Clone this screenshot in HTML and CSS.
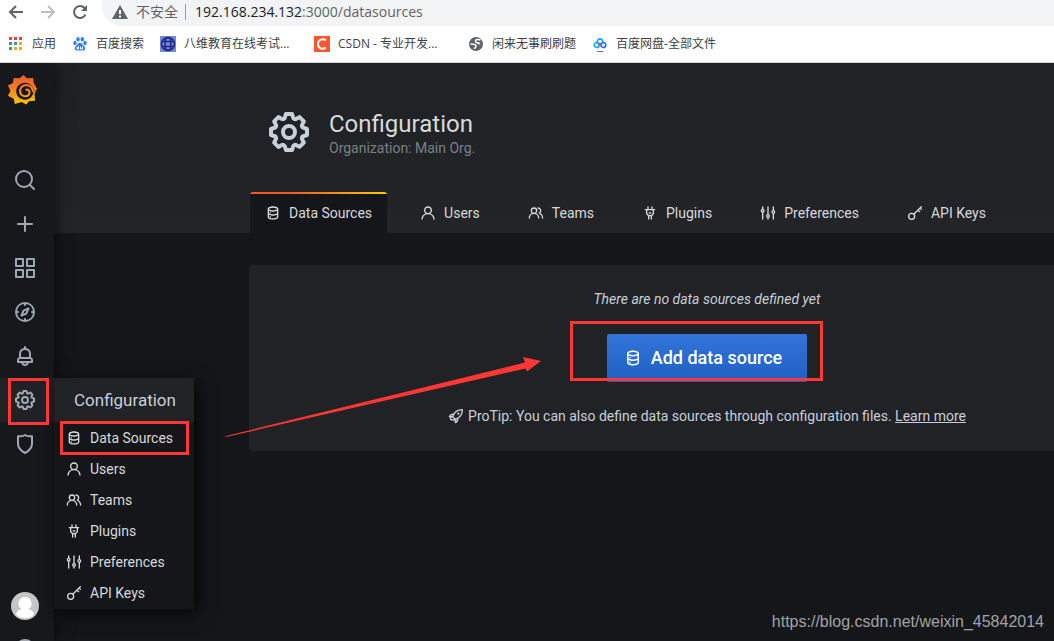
FILE: index.html
```html
<!DOCTYPE html>
<html lang="en">
<head>
<meta charset="utf-8">
<title>Configuration: Data Sources</title>
<link rel="stylesheet" href="styles.css">
</head>
<body>
<svg class="defs" aria-hidden="true">
  <symbol id="database" viewBox="0 0 24 24"><path d="M8,16.5a1,1,0,1,0,1,1A1,1,0,0,0,8,16.5ZM12,2C8,2,4,3.37,4,6V18c0,2.63,4,4,8,4s8-1.37,8-4V6C20,3.37,16,2,12,2Zm6,16c0,.71-2.28,2-6,2s-6-1.29-6-2V14.73A13.16,13.16,0,0,0,12,16a13.16,13.16,0,0,0,6-1.27Zm0-6c0,.71-2.28,2-6,2s-6-1.29-6-2V8.73A13.16,13.16,0,0,0,12,10a13.16,13.16,0,0,0,6-1.27ZM12,8C8.28,8,6,6.71,6,6s2.28-2,6-2,6,1.29,6,2S15.72,8,12,8ZM8,10.5a1,1,0,1,0,1,1A1,1,0,0,0,8,10.5Z"/></symbol>
  <symbol id="cog" viewBox="0 0 24 24"><path d="M21.32,9.55l-1.89-.63.89-1.78A1,1,0,0,0,20.13,6L18,3.87a1,1,0,0,0-1.15-.19l-1.78.89-.63-1.89A1,1,0,0,0,13.5,2h-3a1,1,0,0,0-.95.68L8.92,4.57,7.14,3.68A1,1,0,0,0,6,3.87L3.87,6a1,1,0,0,0-.19,1.15l.89,1.78-1.89.63A1,1,0,0,0,2,10.5v3a1,1,0,0,0,.68.95l1.89.63-.89,1.78A1,1,0,0,0,3.87,18L6,20.13a1,1,0,0,0,1.15.19l1.78-.89.63,1.89a1,1,0,0,0,.95.68h3a1,1,0,0,0,.95-.68l.63-1.89,1.78.89A1,1,0,0,0,18,20.13L20.13,18a1,1,0,0,0,.19-1.15l-.89-1.78,1.89-.63A1,1,0,0,0,22,13.5v-3A1,1,0,0,0,21.32,9.55ZM20,12.78l-1.2.4A2,2,0,0,0,17.64,16l.57,1.14-1.1,1.1L16,17.64a2,2,0,0,0-2.79,1.16l-.4,1.2H11.22l-.4-1.2A2,2,0,0,0,8,17.64l-1.14.57-1.1-1.1L6.36,16A2,2,0,0,0,5.2,13.18L4,12.78V11.22l1.2-.4A2,2,0,0,0,6.36,8L5.79,6.89l1.1-1.1L8,6.36A2,2,0,0,0,10.82,5.2l.4-1.2h1.56l.4,1.2A2,2,0,0,0,16,6.36l1.14-.57,1.1,1.1L17.64,8a2,2,0,0,0,1.16,2.79l1.2.4ZM12,8a4,4,0,1,0,4,4A4,4,0,0,0,12,8Zm0,6a2,2,0,1,1,2-2A2,2,0,0,1,12,14Z"/></symbol>
  <symbol id="user" viewBox="0 0 24 24"><path d="M15.71,12.71a6,6,0,1,0-7.42,0,10,10,0,0,0-6.22,8.18,1,1,0,0,0,2,.22,8,8,0,0,1,15.9,0,1,1,0,0,0,1,.89h.11a1,1,0,0,0,.88-1.1A10,10,0,0,0,15.71,12.71ZM12,12a4,4,0,1,1,4-4A4,4,0,0,1,12,12Z"/></symbol>
  <symbol id="users" viewBox="0 0 24 24"><path d="M12.3,12.22A4.92,4.92,0,0,0,14,8.5a5,5,0,0,0-10,0,4.92,4.92,0,0,0,1.7,3.72A8,8,0,0,0,1,19.5a1,1,0,0,0,2,0,6,6,0,0,1,12,0,1,1,0,0,0,2,0A8,8,0,0,0,12.3,12.22ZM9,11.5a3,3,0,1,1,3-3A3,3,0,0,1,9,11.5Zm9.74.32A5,5,0,0,0,15,3.5a1,1,0,0,0,0,2,3,3,0,0,1,3,3,3,3,0,0,1-1.5,2.59,1,1,0,0,0-.5.84,1,1,0,0,0,.45.86l.39.26.13.07a7,7,0,0,1,4,6.38,1,1,0,0,0,2,0A9,9,0,0,0,18.74,11.82Z"/></symbol>
  <symbol id="plug" viewBox="0 0 24 24"><path d="M19,6H16V3a1,1,0,0,0-2,0V6H10V3A1,1,0,0,0,8,3V6H5A1,1,0,0,0,5,8H6v5a1,1,0,0,0,.29.71L9,16.41V21a1,1,0,0,0,2,0V17h2v4a1,1,0,0,0,2,0V16.41l2.71-2.7A1,1,0,0,0,18,13V8h1a1,1,0,0,0,0-2Zm-3,6.59L13.59,15H10.41L8,12.59V8h8ZM11,13h2a1,1,0,0,0,0-2H11a1,1,0,0,0,0,2Z"/></symbol>
  <symbol id="sliders" viewBox="0 0 24 24"><g fill="none" stroke="currentColor" stroke-width="2" stroke-linecap="round"><path d="M4 3v3M4 11v10M12 3v11M12 19v2M20 3v5M20 13v8"/><circle cx="4" cy="8.500" r="2"/><circle cx="12" cy="16.500" r="2"/><circle cx="20" cy="10.500" r="2"/></g></symbol>
  <symbol id="key" viewBox="0 0 24 24"><g fill="none" stroke="currentColor" stroke-width="2" stroke-linecap="round" stroke-linejoin="round"><circle cx="7" cy="17" r="4.500"/><path d="M10.500 13.500 21.500 2.500M16.500 7.500l2.500 2.500M19.500 4.500l2 2"/></g></symbol>
  <symbol id="compass" viewBox="0 0 24 24"><path d="M12,2A10,10,0,1,0,22,12,10,10,0,0,0,12,2Zm1,17.93V19a1,1,0,0,0-2,0v.93A8,8,0,0,1,4.07,13H5a1,1,0,0,0,0-2H4.07A8,8,0,0,1,11,4.07V5a1,1,0,0,0,2,0V4.07A8,8,0,0,1,19.93,11H19a1,1,0,0,0,0,2h.93A8,8,0,0,1,13,19.93ZM15.14,7.55l-5,2.12a1,1,0,0,0-.52.52l-2.12,5a1,1,0,0,0,.21,1.1,1,1,0,0,0,.7.3.93.93,0,0,0,.4-.09l5-2.12a1,1,0,0,0,.52-.52l2.12-5a1,1,0,0,0-1.31-1.31Zm-2.49,5.1-2.28,1,1-2.28,2.28-1Z"/></symbol>
  <symbol id="bell" viewBox="0 0 24 24"><path d="M18,13.18V10a6,6,0,0,0-5-5.91V3a1,1,0,0,0-2,0V4.09A6,6,0,0,0,6,10v3.18A3,3,0,0,0,4,16v2a1,1,0,0,0,1,1H8.14a4,4,0,0,0,7.72,0H19a1,1,0,0,0,1-1V16A3,3,0,0,0,18,13.18ZM8,10a4,4,0,0,1,8,0v3H8Zm4,10a2,2,0,0,1-1.72-1h3.44A2,2,0,0,1,12,20Zm6-3H6V16a1,1,0,0,1,1-1H17a1,1,0,0,1,1,1Z"/></symbol>
  <symbol id="search" viewBox="0 0 24 24"><g fill="none" stroke="currentColor" stroke-width="2" stroke-linecap="round"><circle cx="11" cy="11" r="8"/><path d="m17 17 4 4"/></g></symbol>
  <symbol id="plus" viewBox="0 0 24 24"><path d="M12 5v14M5 12h14" stroke="currentColor" stroke-width="2" stroke-linecap="round"/></symbol>
  <symbol id="apps" viewBox="0 0 24 24"><path d="M3 3h7v7H3zM14 3h7v7h-7zM3 14h7v7H3zM14 14h7v7h-7z" fill="none" stroke="currentColor" stroke-width="2" stroke-linejoin="round"/></symbol>
  <symbol id="shield" viewBox="0 0 24 24"><path d="M5 4.200C7.500 4.600 9.800 4.300 12 3c2.200 1.300 4.500 1.600 7 1.200v7.600c0 4-2.500 6.900-7 9.200-4.500-2.300-7-5.200-7-9.200z" fill="none" stroke="currentColor" stroke-width="2" stroke-linejoin="round"/></symbol>
  <symbol id="rocket" viewBox="0 0 24 24"><g fill="none" stroke="currentColor" stroke-width="2" stroke-linecap="round" stroke-linejoin="round"><path d="M7 13C9 7 14 2.500 21.500 2.500 21.500 10 17 15 11 17zM9 9.500c-3-.5-5.500.5-7 3.500L7 13M14.500 15c.5 3-.5 5.500-3.500 7V17M7 13c-3 .5-4 2-3 4 2 1 4 1 7 0"/><circle cx="15.500" cy="8.500" r="0.700"/></g></symbol>
</svg>

<header class="browser">
  <div class="toolbar">
    <button class="tool" aria-label="Back"><svg viewBox="0 0 16 16"><path d="M15 8H2M8 2 2 8l6 6" fill="none" stroke="#5f6368" stroke-width="2"/></svg></button>
    <button class="tool" aria-label="Forward"><svg viewBox="0 0 16 16"><path d="M1 8h13M8 2l6 6-6 6" fill="none" stroke="#bcbec1" stroke-width="2"/></svg></button>
    <button class="tool" aria-label="Reload"><svg viewBox="0 0 16 16"><path d="M13.500 10.500A6 6 0 1 1 12.500 4L14 5.500" fill="none" stroke="#5f6368" stroke-width="2"/><path d="M15 1v6H9z" fill="#5f6368"/></svg></button>
    <div class="address">
      <svg class="warn" viewBox="0 0 16 14"><path d="M8 0 16 14H0z" fill="#5f6368"/><path d="M8 5v4M8 10.500v2" stroke="#fff" stroke-width="2"/></svg>
      <span class="insecure">不安全</span>
      <span class="url">192.168.234.132<span class="url-rest">:3000/datasources</span></span>
    </div>
  </div>
  <nav class="bookmarks" aria-label="Bookmarks">
    <a href="#"><svg class="favicon" viewBox="0 0 16 16"><path d="M1 1h3v3H1zM6 1h3v3H6zM11 1h3v3h-3z" fill="#ea4335"/><path d="M1 6h3v3H1zM1 11h3v3H1z" fill="#34a060"/><path d="M6 6h3v3H6z" fill="#4285f4"/><path d="M11 6h3v3h-3zM6 11h3v3H6zM11 11h3v3h-3z" fill="#f2ab12"/></svg>应用</a>
    <a href="#"><svg class="favicon" viewBox="0 0 16 16"><g fill="#2f80f2"><ellipse cx="3" cy="7" rx="1.700" ry="2.200"/><ellipse cx="6" cy="3.200" rx="1.700" ry="2.300"/><ellipse cx="10.300" cy="3.200" rx="1.700" ry="2.300"/><ellipse cx="13" cy="7" rx="1.700" ry="2.200"/><path d="M8 6.800c2 0 2.500 2 4 3.200 1.800 1.500 1.500 5-1.500 4.600-2-.3-3-.3-5 0-3 .4-3.500-3-1.600-4.600C5.500 8.800 6 6.800 8 6.800z"/></g><path d="M6.500 10v3H5v-1.500h1.500M8.500 10.500V13h2v-2.500" fill="none" stroke="#fff"/></svg>百度搜索</a>
    <a href="#"><svg class="favicon" viewBox="0 0 16 16"><path d="M0 0h16v16H0z" fill="#6c8fce"/><g fill="none" stroke="#24218f" stroke-width="1.500"><circle cx="8" cy="8" r="6.500"/><ellipse cx="8" cy="8" rx="3" ry="6.500"/><path d="M2 5.500h12M2 10.500h12"/></g></svg><span class="bookmark-long">八维教育在线考试...</span></a>
    <a href="#"><svg class="favicon" viewBox="0 0 16 16"><path d="M0 0h16v16H0z" fill="#fc5531"/><path d="M12 4.500C9.500 2.500 4 3 4 8.200c0 4.800 5 5.300 7.700 3.500" fill="none" stroke="#fff" stroke-width="2"/></svg><span class="bookmark-long">CSDN - 专业开发...</span></a>
    <a href="#"><svg class="favicon" viewBox="0 0 16 16"><circle cx="8" cy="8" r="7" fill="#5f6368"/><path d="M12.500 4C10 3 7.500 3.500 7.500 5.200c0 2 3 1.300 4.300 2.800M2.500 8c2.500 0 5.500 0 5.500 1.800 0 1.700-1.500 1.700-1.500 3.200" fill="none" stroke="#fff" stroke-width="1.600"/></svg>闲来无事刷刷题</a>
    <a href="#"><svg class="favicon" viewBox="0 0 16 16"><g fill="none" stroke-width="1.700"><circle cx="8" cy="5.500" r="2.700" stroke="#19a8f5"/><circle cx="4.700" cy="9" r="2.500" stroke="#19a8f5"/><circle cx="11.300" cy="9" r="2.500" stroke="#1f7de8"/><path d="m6.500 7 3.500 3.500" stroke="#f0455a"/><path d="M5 15.500h3" stroke="#f0455a" stroke-width="1"/><path d="M8 15.500h3" stroke="#1f7de8" stroke-width="1"/></g></svg>百度网盘-全部文件</a>
  </nav>
</header>

<div class="app">
  <nav class="sidebar" aria-label="Main menu">
    <a class="logo" href="#" aria-label="Home"><svg viewBox="0 0 32 32"><defs><linearGradient id="flame" gradientUnits="userSpaceOnUse" x1="0" y1="0" x2="0" y2="32"><stop offset="0" stop-color="#f05a28"/><stop offset="0.400" stop-color="#f4762a"/><stop offset="1" stop-color="#fbca0a"/></linearGradient></defs><path d="M17 1 20.500 4.500 27 4 27.500 9 31 15.500 28.500 20.500 29 27.500 22.500 28 20 31.500 15 29 8 31 7 25.500 1 22.500 3.500 17.500 1 11.500 6 9.500 7 4 13 4.500z" fill="url(#flame)"/><path d="M32 17.500 27.500 17.500C27 23 23.500 26.500 18.800 26.500 13.500 26.500 9.500 22.500 9.500 17.800 9.500 13 13.500 9 18.500 9 23 9 27 12 28 17h4z" fill="#16181b"/><path d="M26.800 17.500C26 13.500 23 11.500 20 11.500c-4 0-6.500 2.800-6.500 6 0 3.300 2.500 5.500 5.300 5.500 2.700 0 4.500-1.700 4.500-3.800 0-2-1.500-3.200-3.300-3" fill="none" stroke="url(#flame)" stroke-width="2.200" stroke-linecap="round"/></svg></a>
    <ul class="menu">
      <li><a href="#" aria-label="Search"><svg><use href="#search"/></svg></a></li>
      <li><a href="#" aria-label="Create"><svg><use href="#plus"/></svg></a></li>
      <li><a href="#" aria-label="Dashboards"><svg><use href="#apps"/></svg></a></li>
      <li><a href="#" aria-label="Explore"><svg><use href="#compass"/></svg></a></li>
      <li><a href="#" aria-label="Alerting"><svg><use href="#bell"/></svg></a></li>
      <li class="open">
        <a href="#" aria-label="Configuration"><svg><use href="#cog"/></svg></a>
        <div class="flyout">
          <a class="flyout-title" href="#">Configuration</a>
          <a href="#"><svg><use href="#database"/></svg>Data Sources</a>
          <a href="#"><svg><use href="#user"/></svg>Users</a>
          <a href="#"><svg><use href="#users"/></svg>Teams</a>
          <a href="#"><svg><use href="#plug"/></svg>Plugins</a>
          <a href="#"><svg><use href="#sliders"/></svg>Preferences</a>
          <a href="#"><svg><use href="#key"/></svg>API Keys</a>
          <span class="mark mark-item"></span>
        </div>
        <span class="mark mark-cog"></span>
      </li>
      <li><a href="#" aria-label="Server admin"><svg><use href="#shield"/></svg></a></li>
    </ul>
    <div class="account">
      <a href="#" aria-label="Profile"><svg class="avatar" viewBox="0 0 28 28"><circle cx="14" cy="14" r="14" fill="#c5c5c5"/><path d="M14 5a6.500 6.500 0 0 1 3.500 12c3 .5 5 2.500 5.500 5.500a12.500 12.500 0 0 1-18 0c.5-3 2.500-5 5.500-5.500A6.500 6.500 0 0 1 14 5z" fill="#fff"/></svg></a>
      <a href="#" aria-label="Help"><svg class="help" viewBox="0 0 20 20"><circle cx="10" cy="10" r="9" fill="none" stroke="#9fa7b3" stroke-width="2"/></svg></a>
    </div>
  </nav>

  <main class="page">
    <div class="page-header">
      <div class="heading">
        <svg class="heading-icon"><use href="#cog"/></svg>
        <div class="heading-text">
          <h1>Configuration</h1>
          <p>Organization: Main Org.</p>
        </div>
      </div>
      <nav class="tabs" aria-label="Configuration">
        <a class="active" href="#"><svg><use href="#database"/></svg>Data Sources</a>
        <a href="#"><svg><use href="#user"/></svg>Users</a>
        <a href="#"><svg><use href="#users"/></svg>Teams</a>
        <a href="#"><svg><use href="#plug"/></svg>Plugins</a>
        <a href="#"><svg><use href="#sliders"/></svg>Preferences</a>
        <a href="#"><svg><use href="#key"/></svg>API Keys</a>
      </nav>
    </div>
    <div class="page-body">
      <section class="panel">
        <p class="empty">There are no data sources defined yet</p>
        <div class="action">
          <button class="add"><svg><use href="#database"/></svg>Add data source</button>
          <span class="mark mark-add"></span>
          <svg class="arrow" viewBox="0 0 316 84"><path d="M0 79 299 5.500 297 0 315 4 301 14.500 299.500 11.500 0 80z" fill="#ff3835"/></svg>
        </div>
        <p class="tip"><svg><use href="#rocket"/></svg>ProTip: You can also define data sources through configuration files. <a href="#">Learn more</a></p>
      </section>
    </div>
    <p class="watermark">https://blog.csdn.net/weixin_45842014</p>
  </main>
</div>
</body>
</html>
```
FILE: styles.css
```css
* { box-sizing: border-box; }

body {
  display: flex;
  flex-direction: column;
  height: 100vh;
  margin: 0;
  overflow: hidden;
  background: #141619;
  color: #c7d0d9;
  font: 14px/20px Roboto, "Noto Sans CJK SC", sans-serif;
}

a { color: inherit; text-decoration: none; }
p, h1, ul { margin: 0; padding: 0; }
ul { list-style: none; }
button { border: 0; font: inherit; }
svg { flex: none; fill: currentColor; }
.defs { position: absolute; width: 0; height: 0; }

/* Browser chrome */
.browser {
  position: relative;
  z-index: 3;
  flex: none;
  background: #fff;
  border-bottom: 1px solid #d5d7db;
  color: #3c4043;
  font-family: "Open Sans", "Noto Sans CJK SC", sans-serif;
}
.toolbar { display: flex; height: 26px; padding-left: 8px; gap: 16px; overflow: hidden; }
.tool { width: 16px; height: 24px; padding: 4px 0; background: none; }
.tool svg { display: block; width: 16px; height: 16px; }
.address {
  display: flex;
  flex: 1;
  align-items: center;
  height: 26px;
  margin-left: -2px;
  padding: 0 0 2px 10px;
  background: #f1f3f4;
  border-radius: 0 0 0 20px;
}
.warn { width: 16px; height: 14px; margin-right: 8px; }
.insecure { padding-right: 7px; border-right: 1px solid #9a9da1; color: #5f6368; line-height: 16px; }
.url { padding-left: 9px; color: #202124; font-size: 14px; }
.url-rest { color: #5f6368; }
.bookmarks { display: flex; align-items: center; gap: 16px; height: 36px; padding-left: 8px; font-size: 12px; white-space: nowrap; }
.bookmarks a { display: flex; align-items: center; gap: 8px; }
.favicon { width: 16px; height: 16px; }
.bookmark-long { min-width: 114px; }

/* Sidebar */
.app { display: flex; flex: 1; min-height: 0; }
.sidebar {
  position: relative;
  z-index: 2;
  display: flex;
  flex: none;
  flex-direction: column;
  width: 54px;
  background: #16181b;
  box-shadow: 0 0 16px #000a;
  color: #9fa7b3;
}
.logo { height: 95px; padding: 11px 0 0 7px; }
.logo svg { display: block; width: 31px; height: 31px; }
.menu a { display: flex; align-items: center; }
.menu li > a { height: 44px; padding-left: 13px; }
.menu li > a svg { width: 24px; height: 24px; }
.menu .open { position: relative; background: #202226; }
.account { height: 49px; margin-top: auto; padding-left: 11px; overflow: hidden; }
.account a { display: block; }
.avatar { display: block; width: 28px; height: 28px; }
.help { display: block; width: 20px; height: 20px; margin: 19px 4px 0; }

.flyout {
  position: absolute;
  top: 0;
  left: 54px;
  width: 140px;
  padding-bottom: 1px;
  background: #141619;
  box-shadow: 4px 4px 16px #000c;
  color: #d8d9da;
}
.flyout a { height: 31px; padding-left: 12px; gap: 8px; }
.flyout svg { width: 16px; height: 16px; }
.flyout .flyout-title { height: 44px; padding-left: 20px; background: #202226; color: #c7d0d9; font-size: 17px; }

/* Page */
.page { position: relative; display: flex; flex: 1; flex-direction: column; min-width: 0; overflow: hidden; }
.page-header { padding: 45px 0 0 195px; background: linear-gradient(#1f2125, #222427); }
.heading { display: flex; align-items: center; gap: 16px; height: 48px; padding-left: 16px; }
.heading-icon { width: 48px; height: 48px; }
.heading-text { padding-top: 4px; }
h1 { color: #d8d9da; font-size: 24px; font-weight: 400; line-height: 28px; }
.heading p { color: #7b8087; }
.tabs { display: flex; gap: 18px; margin-top: 36px; padding-left: 1px; color: #d8d9da; white-space: nowrap; }
.tabs a { position: relative; display: flex; align-items: center; gap: 8px; height: 41px; padding: 0 15px; border-radius: 3px 3px 0 0; overflow: hidden; }
.tabs svg { width: 16px; height: 16px; }
.tabs .active { background: #141619; }
.tabs .active::before { content: ""; position: absolute; top: 0; left: 0; right: 0; height: 2px; background: linear-gradient(90deg, #f05a28 30%, #fbca0a); }

.page-body { padding: 32px 0 0 195px; }
.panel {
  display: flex;
  flex-direction: column;
  align-items: center;
  min-width: 916px;
  padding: 24px 32px 25px;
  background: #202226;
  border-radius: 3px;
}
.empty { font-style: italic; }
.action { position: relative; margin: 25px 0 24px; }
.add {
  display: flex;
  align-items: center;
  gap: 9px;
  height: 48px;
  padding: 0 25px 0 17px;
  background: linear-gradient(#3274d9, #1f60c4);
  border-radius: 2px;
  color: #fff;
  font-size: 18px;
  font-weight: 500;
}
.add svg { width: 18px; height: 18px; }
.tip { display: flex; align-items: center; white-space: pre; }
.tip svg { width: 16px; height: 16px; margin-right: 4px; }
.tip a { text-decoration: underline; }

/* Drawn annotations */
.mark { position: absolute; border: 3px solid #ff3835; pointer-events: none; }
.mark-cog { top: 0; left: 8px; width: 41px; height: 47px; }
.mark-item { top: 43px; left: 6px; width: 129px; height: 34px; }
.mark-add { top: -13px; left: -37px; width: 253px; height: 60px; }
.arrow { position: absolute; top: 23px; left: -381px; width: 316px; height: 84px; }
.watermark { position: absolute; right: 10px; bottom: 9px; color: #a2a3a5; font: 16px/20px "Liberation Sans", Arial, sans-serif; }
```
